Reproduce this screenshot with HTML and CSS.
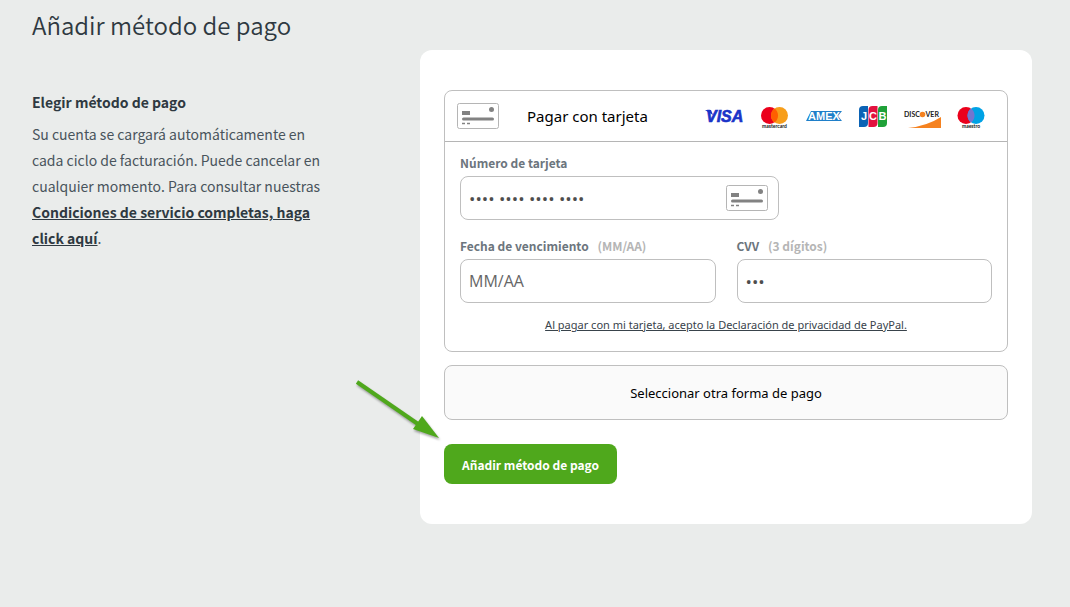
FILE: index.html
```html
<!DOCTYPE html>
<html lang="es">
<head>
  <meta charset="UTF-8">
  <meta name="viewport" content="width=device-width, initial-scale=1">
  <title>Añadir método de pago</title>
  <link rel="stylesheet" href="styles.css">
</head>
<body>
<main class="page">
  <section class="intro">
    <h1>Añadir método de pago</h1>
    <h2>Elegir método de pago</h2>
    <p>Su cuenta se cargará automáticamente en cada ciclo de facturación. Puede cancelar en cualquier momento. Para consultar nuestras <a href="#">Condiciones de servicio completas, haga click aquí</a>.</p>
  </section>

  <form class="panel" action="#" method="post">
    <div class="card-box">
      <div class="card-head">
        <svg class="card-icon" viewBox="0 0 42 26" aria-hidden="true">
          <rect x="0.5" y="0.5" width="41" height="25" rx="2" fill="#fff" stroke="#b5b5b5"/>
          <rect x="5" y="8" width="8" height="4" fill="#828282"/>
          <circle cx="34.500" cy="6.500" r="2.500" fill="#828282"/>
          <rect x="5" y="14.500" width="32" height="3" rx="1.500" fill="#828282"/>
          <path d="M5 20.500h3M10 20.500h3" stroke="#828282" stroke-width="1.500"/>
        </svg>
        <span class="card-title">Pagar con tarjeta</span>
        <div class="logos">
          <svg width="40" height="28" viewBox="0 0 40 28" role="img" aria-label="Visa">
            <text x="1" y="20" font-size="16" font-weight="700" font-style="italic" font-family="Liberation Sans, sans-serif" fill="#1a34c8" stroke="#1a34c8" stroke-width="0.6">VISA</text>
            <path d="M0 8h6l2 5z" fill="#1a34c8"/>
          </svg>
          <svg width="28" height="28" viewBox="0 0 28 28" role="img" aria-label="Mastercard">
            <circle cx="8.500" cy="13.500" r="8.500" fill="#eb001b"/>
            <circle cx="18.500" cy="13.500" r="8.500" fill="#f79e1b"/>
            <path d="M13.500 6.600a8.500 8.500 0 0 1 0 13.800a8.500 8.500 0 0 1 0-13.800z" fill="#ff5f00"/>
            <text x="13.500" y="26" font-size="5" font-weight="700" text-anchor="middle" font-family="Lato, sans-serif" fill="#111">mastercard</text>
          </svg>
          <svg width="38" height="28" viewBox="0 0 38 28" role="img" aria-label="American Express">
            <path d="M6 9h31l-4 5 4 5H1z" fill="#1f7fc9"/>
            <text x="19" y="18" font-size="11" font-weight="700" text-anchor="middle" font-family="Liberation Sans, sans-serif" fill="#fff">AMEX</text>
          </svg>
          <svg width="28" height="28" viewBox="0 0 28 28" role="img" aria-label="JCB">
            <path d="M4 4h5v17a4 4 0 0 1-4 4H0V8a4 4 0 0 1 4-4z" fill="#0b63b5"/>
            <path d="M13.500 4h5v17a4 4 0 0 1-4 4h-5V8a4 4 0 0 1 4-4z" fill="#e2123f"/>
            <path d="M23 4h5v17a4 4 0 0 1-4 4h-5V8a4 4 0 0 1 4-4z" fill="#1fa138"/>
            <g font-size="11" font-weight="700" text-anchor="middle" font-family="Liberation Sans, sans-serif" fill="#fff">
              <text x="5" y="18">J</text><text x="14" y="18">C</text><text x="23.500" y="18">B</text>
            </g>
          </svg>
          <svg width="38" height="28" viewBox="0 0 38 28" role="img" aria-label="Discover">
            <path d="M5 26q19-2 33-11v11z" fill="#f58220"/>
            <text x="1" y="15" font-size="7" font-weight="700" font-family="Lato, sans-serif" fill="#222">DISC</text>
            <circle cx="19.500" cy="12.500" r="2.800" fill="#f58220"/>
            <text x="22.500" y="15" font-size="7" font-weight="700" font-family="Lato, sans-serif" fill="#222">VER</text>
          </svg>
          <svg width="28" height="28" viewBox="0 0 28 28" role="img" aria-label="Maestro">
            <circle cx="9" cy="13.500" r="8.500" fill="#eb001b"/>
            <circle cx="19" cy="13.500" r="8.500" fill="#00a2e5"/>
            <path d="M14 6.600a8.500 8.500 0 0 1 0 13.800a8.500 8.500 0 0 1 0-13.800z" fill="#7375cf"/>
            <text x="14" y="26" font-size="5" font-weight="700" text-anchor="middle" font-family="Lato, sans-serif" fill="#111">maestro</text>
          </svg>
        </div>
      </div>

      <div class="fields">
        <div class="field number">
          <label for="number">Número de tarjeta</label>
          <div class="input-wrap">
            <input class="dots" type="text" id="number" name="number" placeholder="•••• •••• •••• ••••">
            <svg class="card-icon" viewBox="0 0 42 26" aria-hidden="true">
              <rect x="0.5" y="0.5" width="41" height="25" rx="2" fill="#fff" stroke="#b5b5b5"/>
              <rect x="5" y="8" width="8" height="4" fill="#828282"/>
              <circle cx="34.500" cy="6.500" r="2.500" fill="#828282"/>
              <rect x="5" y="14.500" width="32" height="3" rx="1.500" fill="#828282"/>
              <path d="M5 20.500h3M10 20.500h3" stroke="#828282" stroke-width="1.500"/>
            </svg>
          </div>
        </div>
        <div class="field">
          <label for="expiry">Fecha de vencimiento <span>(MM/AA)</span></label>
          <div class="input-wrap">
            <input type="text" id="expiry" name="expiry" placeholder="MM/AA">
          </div>
        </div>
        <div class="field">
          <label for="cvv">CVV <span>(3 dígitos)</span></label>
          <div class="input-wrap">
            <input class="dots" type="text" id="cvv" name="cvv" placeholder="•••">
          </div>
        </div>
      </div>
      <a class="legal" href="#">Al pagar con mi tarjeta, acepto la Declaración de privacidad de PayPal.</a>
    </div>

    <button class="other" type="button">Seleccionar otra forma de pago</button>
    <div class="actions">
      <button class="submit" type="submit">Añadir método de pago</button>
      <!-- flecha que señala el botón -->
      <svg class="arrow" viewBox="0 0 88 64" aria-hidden="true">
        <path d="M3 5L64 47" stroke="#4fa81c" stroke-width="4"/>
        <path d="M68 39L85 61L59 52z" fill="#4fa81c"/>
      </svg>
    </div>
  </form>
</main>
</body>
</html>
```
FILE: styles.css
```css
* {
  box-sizing: border-box;
}

body {
  margin: 0;
  background: #eaeceb;
  color: #2f3941;
  font-family: "Noto Sans CJK SC", "Noto Sans", sans-serif;
}

.page {
  display: grid;
  grid-template-columns: 300px 1fr;
  column-gap: 88px;
  align-items: start;
  padding: 7px 38px 40px 32px;
}

/* columna izquierda */
.intro h1 {
  margin: 0 0 48px;
  font-size: 24px;
  font-weight: 350;
  line-height: 36px;
}

.intro h2 {
  margin: 0 0 8px;
  font-size: 14px;
  font-weight: 700;
  line-height: 22px;
}

.intro p {
  margin: 0;
  color: #49545c;
  font-size: 14px;
  line-height: 26px;
}

.intro a {
  color: #2f3941;
  font-weight: 700;
}

/* formulario */
.panel {
  margin-top: 43px;
  padding: 40px 24px;
  border-radius: 12px;
  background: #fff;
}

.card-box {
  border: 1px solid #bfbfbf;
  border-radius: 8px;
  padding-bottom: 16px;
}

.card-head {
  display: flex;
  align-items: center;
  height: 51px;
  padding: 0 22px 0 12px;
  border-bottom: 1px solid #b5b5b5;
}

.card-icon {
  flex: none;
  width: 42px;
  height: 26px;
}

.card-title {
  margin-left: 28px;
  color: #000;
  font-family: "Noto Sans", "Open Sans", sans-serif;
  font-size: 15px;
}

.logos {
  display: flex;
  gap: 16px;
  margin-left: auto;
}

.fields {
  display: grid;
  grid-template-columns: 1fr 1fr;
  gap: 16px 21px;
  padding: 11px 15px 0;
}

.number {
  grid-column: 1 / 3;
  width: 60%;
}

.field label {
  display: block;
  margin-bottom: 3px;
  color: #6c757d;
  font-size: 12px;
  font-weight: 700;
  line-height: 20px;
}

.field label span {
  margin-left: 6px;
  color: #b5b5b5;
}

.input-wrap {
  display: flex;
  align-items: center;
  height: 44px;
  padding: 0 10px 0 8px;
  border: 1px solid #bfbfbf;
  border-radius: 8px;
}

.input-wrap input {
  flex: 1;
  min-width: 0;
  padding: 0;
  border: 0;
  outline: 0;
  background: none;
  color: #666;
  font-family: "Open Sans", sans-serif;
  font-size: 16px;
}

.input-wrap .dots {
  font-size: 17px;
}

.input-wrap input::placeholder {
  color: #666;
}

.input-wrap .dots::placeholder {
  color: #4d4d4d;
}

.legal {
  display: block;
  margin: 12px 0 0;
  color: #39434b;
  font-family: "Noto Sans", "Open Sans", sans-serif;
  font-size: 11px;
  line-height: 20px;
  text-align: center;
}

.other {
  display: block;
  width: 100%;
  height: 55px;
  margin: 13px 0 24px;
  border: 1px solid #bfbfbf;
  border-radius: 8px;
  background: #fafafa;
  color: #000;
  font-family: "Noto Sans", "Open Sans", sans-serif;
  font-size: 13px;
}

.actions {
  position: relative;
}

.submit {
  display: block;
  height: 40px;
  padding: 0 18px;
  border: 0;
  border-radius: 8px;
  background: #4fa81c;
  color: #fff;
  font-family: inherit;
  font-size: 12px;
  font-weight: 700;
}

.arrow {
  position: absolute;
  top: -67px;
  left: -90px;
  width: 88px;
  height: 64px;
  filter: drop-shadow(1px 2px 1px rgba(0, 0, 0, 0.35));
}
```
